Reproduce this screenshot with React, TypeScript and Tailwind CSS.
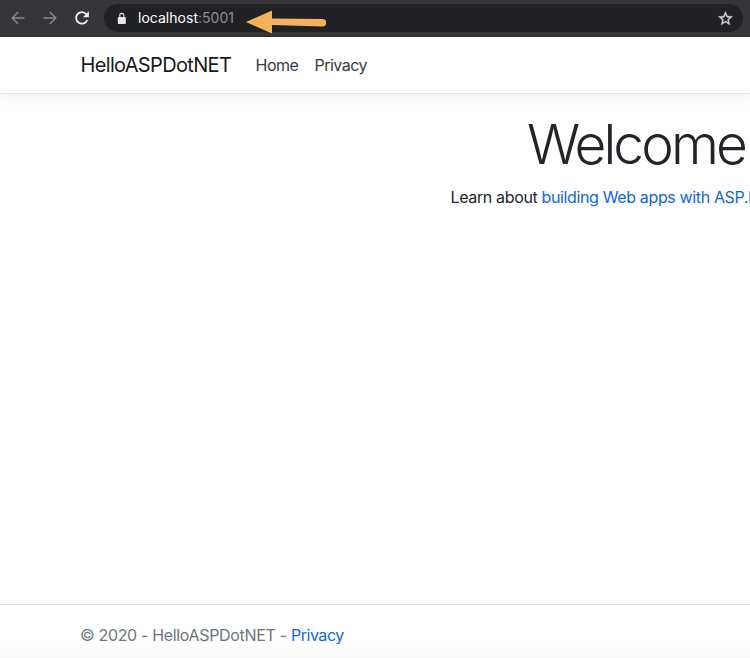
import React from "react";

function BrowserBar() {
  return (
    <div className="flex h-[37px] shrink-0 items-start border-b border-[#28292c] bg-[#35363a] pl-[10px] pt-1">
      <div className="flex h-7 items-center gap-4">
        <svg width="16" height="16" viewBox="0 0 16 16" fill="none" stroke="#85868a" strokeWidth="1.5">
          <path d="M14.5 8H2.5M8.2 2L2.2 8L8.2 14" />
        </svg>
        <svg width="16" height="16" viewBox="0 0 16 16" fill="none" stroke="#85868a" strokeWidth="1.5">
          <path d="M1.5 8H13.5M7.8 2L13.8 8L7.8 14" />
        </svg>
        <svg width="16" height="16" viewBox="0 0 16 16" fill="none">
          <path d="M13.3 10A5.8 5.8 0 1 1 12.4 4.2" stroke="#f1f1f1" strokeWidth="1.8" />
          <path d="M14.9 1.2V7.2H8.9Z" fill="#f1f1f1" />
        </svg>
      </div>
      <div className="ml-[14px] flex h-7 w-[639px] items-center rounded-full bg-[#202124] pl-[13px] pr-[9px]">
        <svg width="10" height="13" viewBox="0 0 10 13" fill="none">
          <rect x="0.8" y="5" width="8" height="7" rx="0.8" fill="#e8e8e8" />
          <path d="M2.8 5.5V3.4a2 2 0 0 1 4 0V5.5" stroke="#e8e8e8" strokeWidth="1.1" />
        </svg>
        <span className="ml-[11px] w-[97px] whitespace-nowrap text-[14px] leading-5 tracking-[0.02px] text-[#8d8f93]">
          <span className="text-white">localhost</span>:5001
        </span>
        <svg className="ml-[10px] mt-2" width="84" height="26" viewBox="0 0 84 26">
          <path d="M1 13L27 1.5V9.4L77.5 10A3.7 3.7 0 0 1 77.5 17.4L27 16V24.5Z" fill="#f4b159" />
        </svg>
        <svg className="ml-auto" width="17" height="17" viewBox="0 0 24 24" fill="#d5d6d8" stroke="#d5d6d8" strokeWidth="0.5">
          <path d="M22 9.24l-7.19-.62L12 2 9.19 8.63 2 9.24l5.46 4.73L5.82 21 12 17.27 18.18 21l-1.63-7.03L22 9.24zM12 15.4l-3.76 2.27 1-4.28-3.32-2.88 4.38-.38L12 6.1l1.71 4.04 4.38.38-3.32 2.88 1 4.28L12 15.4z" />
        </svg>
      </div>
    </div>
  );
}

export default function App() {
  return (
    <div className="flex h-[658px] w-[750px] flex-col overflow-hidden bg-white font-['Inter','Liberation_Sans',sans-serif] text-[16px] leading-6 text-[#212529]">
      <BrowserBar />
      <nav className="flex h-[57px] shrink-0 items-center border-b border-[#dee2e6] pl-[80.5px] shadow-[0_4px_12px_rgba(0,0,0,0.05)]">
        <a className="w-[175px] whitespace-nowrap text-[20px] leading-[30px] tracking-[-0.66px] text-[#17191b]">HelloASPDotNET</a>
        <a className="w-[59px] tracking-[-0.5px] text-[#343a40]">Home</a>
        <a className="tracking-[-0.5px] text-[#343a40]">Privacy</a>
      </nav>
      <main className="flex-1 whitespace-nowrap pt-[17px]">
        <h1 className="pl-[527px] text-[55px] font-light leading-[67px] tracking-[-2.9px]">Welcome</h1>
        <p className="mt-[7px] pl-[450.5px] tracking-[-0.36px]">
          Learn about <a className="text-[#1067d8]">building Web apps with ASP.N</a>
        </p>
      </main>
      <footer className="h-[54px] shrink-0 whitespace-nowrap border-t border-[#dee2e6] bg-gradient-to-b from-white from-70% to-[#fafafa] pl-[80px] pt-[18px] tracking-[-0.33px] text-[#6c757d]">
        © 2020 - HelloASPDotNET - <a className="tracking-[-0.45px] text-[#1067d8]">Privacy</a>
      </footer>
    </div>
  );
}
